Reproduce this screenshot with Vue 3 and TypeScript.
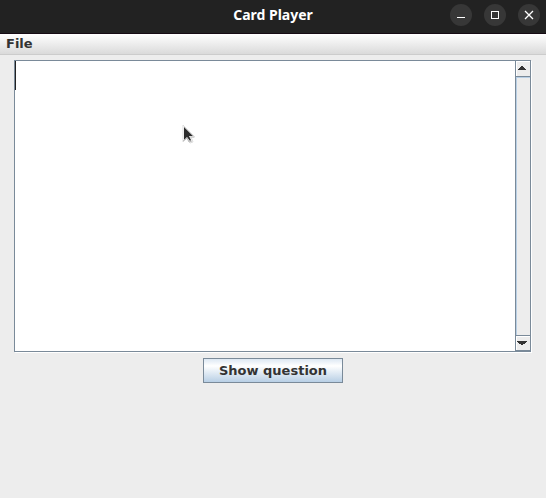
<script setup lang="ts">
import { ref } from 'vue'

const card = ref('')
const area = ref<HTMLTextAreaElement | null>(null)

function scrollLines(lines: number): void {
  area.value?.scrollBy({ top: lines * 29 })
}
</script>

<template>
  <div class="window">
    <header class="titlebar">
      <h1 class="title">Card Player</h1>
      <div class="controls">
        <button class="control" type="button" aria-label="Minimize">
          <svg viewBox="0 0 22 22" shape-rendering="crispEdges"><path d="M7 13h8v1H7z" fill="#fff" /></svg>
        </button>
        <button class="control" type="button" aria-label="Maximize">
          <svg viewBox="0 0 22 22" shape-rendering="crispEdges"><path d="M7.5 7.5h7v7h-7z" fill="none" stroke="#fff" /></svg>
        </button>
        <button class="control" type="button" aria-label="Close">
          <svg viewBox="0 0 22 22"><path d="M7 7l8 8M15 7l-8 8" fill="none" stroke="#fff" stroke-width="1.3" /></svg>
        </button>
      </div>
    </header>

    <nav class="menubar">
      <button class="menu" type="button">File</button>
    </nav>

    <main class="content">
      <div class="pane">
        <div class="viewport">
          <textarea ref="area" v-model="card" class="text" rows="10" aria-label="Card text"></textarea>
          <span class="caret"></span>
        </div>
        <div class="scrollbar">
          <button class="arrow up" type="button" aria-label="Scroll up" @click="scrollLines(-1)">
            <svg viewBox="0 0 10 4" shape-rendering="crispEdges"><path d="M4 0h2v1h1v1h1v1h1v1H1V3h1V2h1V1h1z" fill="#333" /></svg>
          </button>
          <div class="track"></div>
          <button class="arrow down" type="button" aria-label="Scroll down" @click="scrollLines(1)">
            <svg viewBox="0 0 10 4" shape-rendering="crispEdges"><path d="M0 0h10v1H9v1H8v1H6v1H4V3H2V2H1V1H0z" fill="#333" /></svg>
          </button>
        </div>
      </div>
      <button class="show" type="button">Show question</button>
    </main>

    <svg class="pointer" viewBox="0 0 16 24" aria-hidden="true">
      <path d="M3 3v17l4-4 3 5 3-1-2-5h4z" fill="#fff" stroke="#ddd" stroke-width="1" stroke-linejoin="round" />
      <path d="M4 5v13l3-3 3 4 1-1-2-4h4z" fill="#2d2d2d" />
      <path d="M3 19l4-3 2 4 3-1M10 15h4" fill="none" stroke="#bbb" />
    </svg>
  </div>
</template>

<style>
body {
  margin: 0;
  background: #ededed;
}
</style>

<style scoped>
.window {
  position: relative;
  min-height: 100vh;
  background: #ededed;
  color: #333;
  font-family: "DejaVu Sans", sans-serif;
  font-size: 13px;
}

button {
  margin: 0;
  padding: 0;
  border: 0;
  color: inherit;
  font: inherit;
}

.titlebar {
  display: grid;
  grid-template-columns: 1fr auto 1fr;
  align-items: center;
  box-sizing: border-box;
  height: 34px;
  padding: 0 6px 3px;
  border-bottom: 1px solid #160b14;
  background: #222;
}

.title {
  grid-column: 2;
  margin: 0;
  color: #fff;
  font: bold 14px/22px "Noto Sans", sans-serif;
}

.controls {
  display: flex;
  justify-content: flex-end;
  gap: 12px;
}

.control {
  width: 22px;
  height: 22px;
  border-radius: 50%;
  background: #373737;
}

.control svg {
  display: block;
  width: 22px;
  height: 22px;
}

.menubar {
  display: flex;
  align-items: center;
  box-sizing: border-box;
  height: 21px;
  padding: 0 6px;
  border-bottom: 1px solid #ccc;
  background: linear-gradient(#fff, #dadada);
}

.menu {
  background: none;
  font-weight: bold;
  line-height: 16px;
}

.content {
  display: flex;
  flex-direction: column;
  align-items: center;
  gap: 6px;
  padding: 5px 14px;
}

.pane {
  display: flex;
  align-self: stretch;
  margin-right: 1px;
  border: 1px solid #7a8a99;
  box-shadow: 1px 1px #fff;
}

.viewport {
  position: relative;
  display: flex;
  flex: 1;
  background: #fff;
}

.text {
  flex: 1;
  min-width: 0;
  padding: 0;
  border: 0;
  outline: 0;
  resize: none;
  overflow: hidden;
  background: #fff;
  color: #333;
  font: bold 24px/29px "DejaVu Sans", sans-serif;
}

.caret {
  position: absolute;
  top: 0;
  left: 0;
  width: 1px;
  height: 29px;
  background: #222;
}

.scrollbar {
  display: flex;
  flex-direction: column;
  width: 14px;
  border-left: 1px solid #7a8a99;
}

.arrow {
  display: grid;
  place-items: center;
  box-sizing: border-box;
  height: 16px;
  padding: 0 2px 1px 0;
  border-bottom: 1px solid #7a8a99;
  background: #ededed;
  box-shadow: inset 1px 1px #fff;
}

.down {
  height: 15px;
}

.arrow svg {
  width: 10px;
  height: 4px;
}

.track {
  flex: 1;
  border-bottom: 1px solid #7a8a99;
  box-shadow: inset 1px 1px #b8cfe5;
}

.show {
  height: 25px;
  padding: 0 15px;
  border: 1px solid #7a8a99;
  background: linear-gradient(#dde8f3, #fff 30%, #b8cfe5);
  font-weight: bold;
  line-height: 23px;
}

.pointer {
  position: absolute;
  top: 122px;
  left: 180px;
  width: 16px;
  height: 24px;
  pointer-events: none;
}
</style>
